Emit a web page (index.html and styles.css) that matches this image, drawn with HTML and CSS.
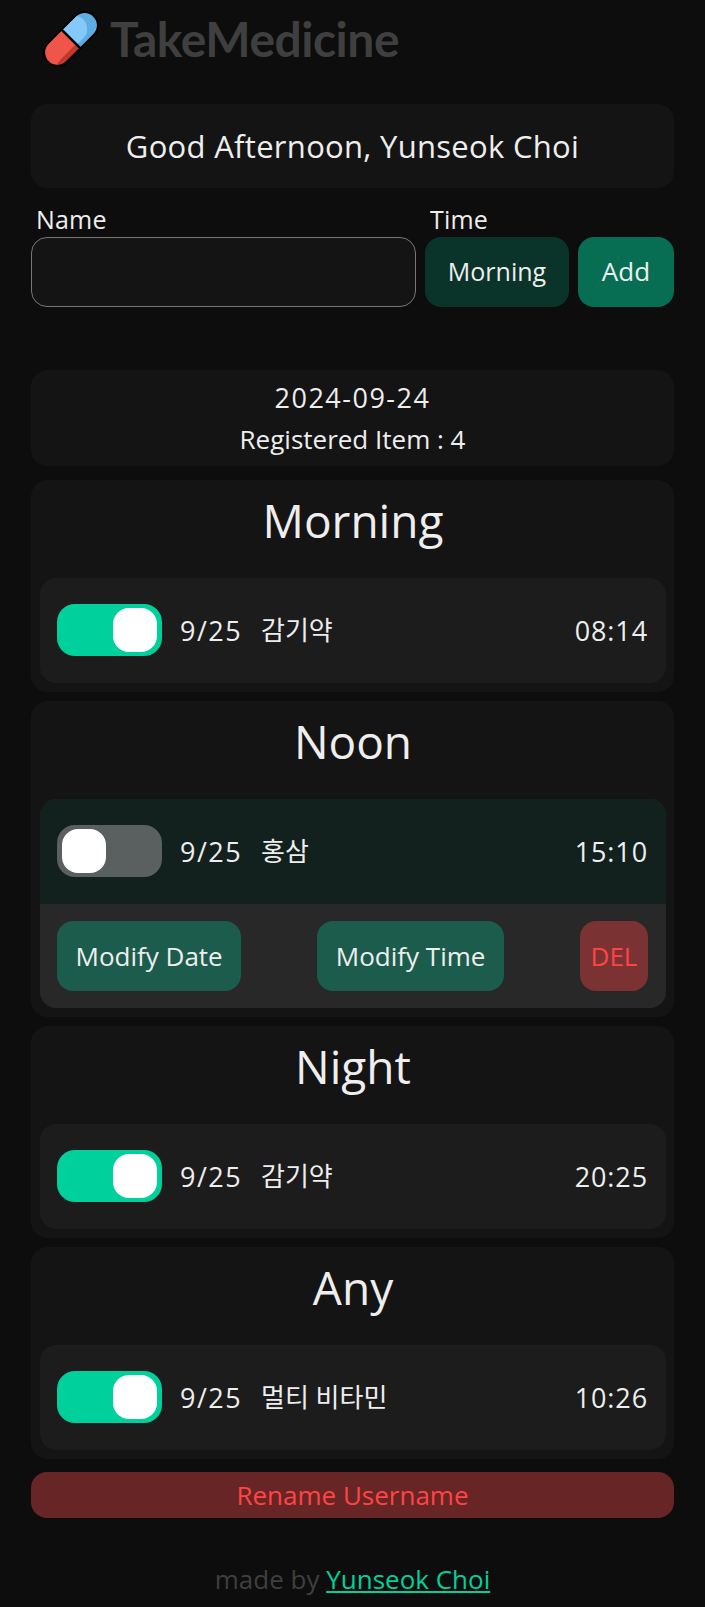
FILE: index.html
```html
<!DOCTYPE html>
<html lang="en">
<head>
<meta charset="utf-8">
<title>TakeMedicine</title>
<link rel="stylesheet" href="styles.css">
</head>
<body>
<header class="brand">
  <svg class="pill" viewBox="0 0 55 55" width="56" height="56" aria-hidden="true">
    <g transform="translate(27.5 27.5) rotate(-45)">
      <rect x="-33" y="-14" width="66" height="28" rx="14" fill="#000"/>
      <path d="M0-12H-19a12 12 0 0 0 0 24H0z" fill="#c0392b"/>
      <path d="M0-12H-19A12 12 0 0 0-27.5 8Q-23 7-19 7H0z" fill="#ef5548"/>
      <path d="M0-12H19a12 12 0 0 1 0 24H0z" fill="#5dade2"/>
      <path d="M0-12H20Q25-5 20 2 16 8 10 8H0z" fill="#85c9f8"/>
      <rect x="-1.2" y="-13" width="2.4" height="26" fill="#000"/>
    </g>
  </svg>
  <span class="brand-name">TakeMedicine</span>
</header>
<section class="card hello">Good Afternoon, Yunseok Choi</section>
<form class="add-form">
  <div class="field grow"><label class="lab">Name</label><div class="input"></div></div>
  <div class="field"><label class="lab">Time</label><button type="button" class="btn time">Morning</button></div>
  <button type="button" class="btn add">Add</button>
</form>
<section class="card summary"><p class="day">2024-09-24</p><p>Registered Item : 4</p></section>
<section class="card group">
  <h2>Morning</h2>
  <div class="item"><div class="row"><span class="toggle on"><i></i></span><span class="date">9/25</span><span class="name">감기약</span><span class="clock">08:14</span></div></div>
</section>
<section class="card group">
  <h2>Noon</h2>
  <div class="item open"><div class="row"><span class="toggle"><i></i></span><span class="date">9/25</span><span class="name">홍삼</span><span class="clock">15:10</span></div>
    <div class="actions"><button type="button" class="btn modify">Modify Date</button><button type="button" class="btn modify">Modify Time</button><button type="button" class="btn del">DEL</button></div>
  </div>
</section>
<section class="card group">
  <h2>Night</h2>
  <div class="item"><div class="row"><span class="toggle on"><i></i></span><span class="date">9/25</span><span class="name">감기약</span><span class="clock">20:25</span></div></div>
</section>
<section class="card group">
  <h2>Any</h2>
  <div class="item"><div class="row"><span class="toggle on"><i></i></span><span class="date">9/25</span><span class="name">멀티 비타민</span><span class="clock">10:26</span></div></div>
</section>
<button type="button" class="rename">Rename Username</button>
<footer class="foot">made by <a href="#">Yunseok Choi</a></footer>
</body>
</html>
```
FILE: styles.css
```css
* { box-sizing: border-box; }
html, body { margin: 0; }
body {
  background: #0d0d0d;
  color: #eeeeee;
  font-family: "Open Sans", "Noto Sans CJK KR", sans-serif;
  font-size: 26px;
  padding: 0 31px;
  height: 1607px;
  overflow: hidden;
}
.brand { display: flex; align-items: center; gap: 11px; height: 78px; padding-left: 12px; margin-bottom: 26px; }
.pill { display: block; flex: none; }
.brand-name { font-family: "Lato", sans-serif; font-size: 48px; font-weight: 700; color: #3f3f3f; letter-spacing: -0.5px; line-height: 78px; }
.card { background: #141414; border-radius: 16px; }
.hello { height: 84px; display: flex; align-items: center; justify-content: center; font-size: 31px; letter-spacing: 0.3px; margin-bottom: 17px; }
.add-form { display: flex; align-items: flex-end; gap: 9px; height: 102px; margin-bottom: 63px; }
.field { display: flex; flex-direction: column; }
.field.grow { flex: 1; }
.lab { height: 32px; line-height: 28px; padding-left: 5px; font-size: 25px; letter-spacing: 0.2px; }
.input { height: 70px; border: 1px solid #777; border-radius: 16px; background: #141414; }
.btn { border: 0; font: inherit; height: 70px; border-radius: 16px; padding: 0 18.5px; }
.time { background: #0a342a; color: #eee; width: 144px; font-size: 25px; padding: 0 0 3px; }
.add { background: #076e54; color: #eee; width: 96px; padding: 0 0 3px; }
.summary { height: 96px; margin-bottom: 14px; display: flex; flex-direction: column; align-items: center; justify-content: center; gap: 7px; }
.summary p { margin: 0; line-height: 35px; }
.day { font-size: 27px; letter-spacing: 1.5px; }
.group { padding: 0 8px 9px 9px; margin-bottom: 9px; }
.group h2 { margin: 0; height: 98px; padding-top: 14px; text-align: center; font-size: 46px; line-height: 52px; font-weight: 400; }
.item { background: #1c1c1c; border-radius: 16px; overflow: hidden; }
.item.open { background: #282828; }
.row { height: 105px; display: flex; align-items: center; padding: 0 18px 1px 17px; }
.open .row { background: #13211e; }
.toggle { display: block; width: 105px; height: 52.5px; border-radius: 18px; background: #5a5f5f; padding: 4px 5px; margin-right: 18px; flex: none; }
.toggle.on { background: #00d09c; display: flex; justify-content: flex-end; }
.toggle i { display: block; width: 44px; height: 44px; border-radius: 16px; background: #fff; }
.date { width: 81px; font-size: 27px; letter-spacing: 1.5px; }
.name { padding-bottom: 2px; }
.clock { margin-left: auto; font-size: 27px; letter-spacing: 0.9px; }
.actions { height: 104px; display: flex; justify-content: space-between; align-items: flex-start; padding: 17px 18px 0 17px; }
.modify { background: #1c5c4c; color: #eee; }
.del { background: #7a3232; color: #ff4444; width: 68px; padding: 0; }
.rename { display: block; width: 100%; height: 46px; margin-top: 13px; border: 0; border-radius: 16px; background: #672525; color: #ff4444; font: inherit; }
.foot { margin-top: 43px; text-align: center; color: #3f3f3f; }
.foot a { color: #00d09c; }
```
